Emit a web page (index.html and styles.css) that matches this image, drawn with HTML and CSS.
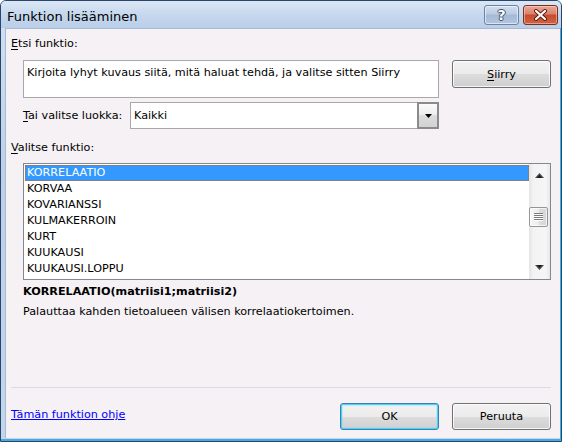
FILE: index.html
```html
<!DOCTYPE html>
<html lang="fi">
<head>
<meta charset="UTF-8" />
<title>Funktion lisääminen</title>
<link rel="stylesheet" href="styles.css">
</head>
<body>

<div class="window">
  <div class="titlebar">
    <span class="title">Funktion lisääminen</span>
    <div class="caption-buttons">
      <div class="cap help">?</div>
      <div class="cap close">
        <svg width="15" height="12" viewBox="0 0 15 12">
          <path d="M3 2 L12 10 M12 2 L3 10" stroke="#5a1c12" stroke-width="4" stroke-linecap="round" fill="none"/>
          <path d="M3 2 L12 10 M12 2 L3 10" stroke="#ffffff" stroke-width="2.2" stroke-linecap="round" fill="none"/>
        </svg>
      </div>
    </div>
  </div>

  <div class="client">
    <div class="label"><u>E</u>tsi funktio:</div>

    <div class="search-row">
      <div class="search-box">Kirjoita lyhyt kuvaus siitä, mitä haluat tehdä, ja valitse sitten Siirry</div>
      <button class="btn go"><u>S</u>iirry</button>
    </div>

    <div class="category-row">
      <span class="category-label"><u>T</u>ai valitse luokka:</span>
      <div class="combo">
        <span class="combo-text">Kaikki</span>
        <div class="combo-btn">
          <svg width="7" height="4" viewBox="0 0 7 4"><path d="M0 0 H7 L3.5 4 Z" fill="#000"/></svg>
        </div>
      </div>
    </div>

    <div class="label list-label"><u>V</u>alitse funktio:</div>

    <div class="listbox">
      <ul class="items">
        <li class="selected">KORRELAATIO</li>
        <li>KORVAA</li>
        <li>KOVARIANSSI</li>
        <li>KULMAKERROIN</li>
        <li>KURT</li>
        <li>KUUKAUSI</li>
        <li>KUUKAUSI.LOPPU</li>
      </ul>
      <div class="scrollbar">
        <div class="arrow">
          <svg width="9" height="5" viewBox="0 0 9 5"><path d="M0 5 L4.5 0 L9 5 Z" fill="#4a4a4a"/><path d="M2 5 L4.5 2 L7 5 Z" fill="#1a1a1a"/></svg>
        </div>
        <div class="thumb">
          <svg width="9" height="8" viewBox="0 0 9 8">
            <path d="M0 0.5 H9 M0 2.5 H9 M0 4.5 H9 M0 6.5 H9" stroke="#7a7a7a" stroke-width="1"/>
            <path d="M0 1.5 H9 M0 3.5 H9 M0 5.5 H9 M0 7.5 H9" stroke="#ffffff" stroke-width="1"/>
          </svg>
        </div>
        <div class="track-fill"></div>
        <div class="arrow">
          <svg width="9" height="5" viewBox="0 0 9 5"><path d="M0 0 L4.5 5 L9 0 Z" fill="#4a4a4a"/><path d="M2 0 L4.5 3 L7 0 Z" fill="#1a1a1a"/></svg>
        </div>
      </div>
    </div>

    <div class="signature">KORRELAATIO(matriisi1;matriisi2)</div>
    <div class="description">Palauttaa kahden tietoalueen välisen korrelaatiokertoimen.</div>

    <div class="separator"></div>

    <div class="footer">
      <a href="#" class="help-link">Tämän funktion ohje</a>
      <div class="footer-buttons">
        <button class="btn default">OK</button>
        <button class="btn">Peruuta</button>
      </div>
    </div>
  </div>
</div>

</body>
</html>
```

FILE: styles.css
```css
/* Base */
html, body {
  margin: 0;
  padding: 0;
  background: #ffffff;
  font-family: "DejaVu Sans", Verdana, sans-serif;
  font-size: 11.2px;
  color: #000;
}

u { text-decoration: underline; text-underline-offset: 2px; }

/* Window frame */
.window {
  width: 562px;
  height: 442px;
  box-sizing: border-box;
  border: 1px solid #29466a;
  border-radius: 6px 6px 0 0;
  padding: 0 1px 3px 4px;
  background: linear-gradient(#d3e2f3, #bcd0e8 40%, #c2d6ec);
  box-shadow: inset -1px 0 0 #35b3ec, inset 0 -2px 0 #4aa8dc;
  display: flex;
  flex-direction: column;
  overflow: hidden;
}

/* Title bar */
.titlebar {
  height: 27px;
  margin: 0 -1px 0 -4px;
  padding: 0 3px 0 6px;
  display: flex;
  align-items: flex-start;
  justify-content: space-between;
  background: linear-gradient(#dbe7f5, #c6d8ee 50%, #b9cee8);
}
.title {
  font-size: 13px;
  line-height: 16px;
  margin-top: 8px;
  color: #000;
}
.caption-buttons {
  display: flex;
  gap: 4px;
  margin-top: 4px;
}
.cap {
  width: 35px;
  height: 20px;
  box-sizing: border-box;
  border-radius: 3px;
  display: flex;
  align-items: center;
  justify-content: center;
}
.help {
  border: 1px solid #6c83a3;
  background: linear-gradient(#d2deee, #b9cbe3 45%, #a3b9d6 50%, #b2c6e0);
  box-shadow: inset 0 0 0 1px rgba(255,255,255,0.55);
  color: #fff;
  font-weight: bold;
  font-size: 14px;
  line-height: 18px;
  text-shadow: 1px 0 0 #3b4d66, -1px 0 0 #3b4d66, 0 1px 0 #3b4d66, 0 -1px 0 #3b4d66;
}
.close {
  border: 1px solid #7c2d20;
  background: linear-gradient(#e9a998, #d9806b 45%, #c54a30 50%, #d2643f);
  box-shadow: inset 0 0 0 1px rgba(255,220,210,0.5);
}

/* Client area */
.client {
  flex: 1;
  background: #f5f1f5;
  box-shadow: inset 1px 1px 0 #a7bad3;
  padding: 8px 9px 8px 6px;
  display: flex;
  flex-direction: column;
}
.label {
  line-height: 16px;
}

.search-row {
  display: flex;
  margin: 8px 0 0 12px;
}
.search-box {
  box-sizing: border-box;
  width: 416px;
  height: 38px;
  border: 1px solid #a8a8a8;
  background: #fff;
  padding: 4px 3px 3px;
  line-height: 16px;
}
.btn {
  box-sizing: border-box;
  width: 99px;
  height: 27px;
  padding: 0;
  border: 1px solid #707070;
  border-radius: 3px;
  background: linear-gradient(#f2f2f2, #ebebeb 50%, #dddddd 50%, #cfcfcf);
  box-shadow: inset 0 0 0 1px rgba(255,255,255,0.8);
  font: inherit;
  color: #000;
}
.btn.go {
  height: 28px;
  margin-left: auto;
}
.btn.default {
  border-color: #3c7fb1;
  box-shadow: inset 0 0 0 1px #4fd0f7, inset 0 0 0 2px rgba(120,220,250,0.35);
}

/* Category */
.category-row {
  display: flex;
  align-items: center;
  margin: 4px 0 0 12px;
}
.category-label {
  width: 107px;
}
.combo {
  box-sizing: border-box;
  width: 309px;
  height: 27px;
  border: 1px solid #a8a8a8;
  background: #fff;
  display: flex;
}
.combo-text {
  flex: 1;
  padding-left: 3px;
  line-height: 25px;
}
.combo-btn {
  box-sizing: border-box;
  width: 22px;
  margin: -1px -1px -1px 0;
  border: 2px solid #8b8b8b;
  background: linear-gradient(#fbfbfb, #ececec 50%, #dcdcdc 50%, #d2d2d2);
  display: flex;
  align-items: center;
  justify-content: center;
}

/* Function list */
.list-label {
  margin-top: 11px;
}
.listbox {
  box-sizing: border-box;
  width: 528px;
  height: 117px;
  margin: 7px 0 0 12px;
  border: 1px solid #828790;
  background: #fff;
  display: flex;
}
.items {
  flex: 1;
  list-style: none;
  margin: 0;
  padding: 1px 0 0 1px;
}
.items li {
  height: 16px;
  line-height: 16px;
  padding-left: 2px;
}
.items li.selected {
  background: #3399ff;
  color: #fff;
  outline: 1px dotted #c96a10;
  outline-offset: -1px;
}
.scrollbar {
  width: 21px;
  display: flex;
  flex-direction: column;
  background: linear-gradient(90deg, #e4e4e4, #f3f3f3 20%, #f6f6f6 80%, #e8e8e8);
}
.arrow {
  height: 23px;
  display: flex;
  align-items: center;
  justify-content: center;
}
.thumb {
  box-sizing: border-box;
  height: 20px;
  margin: 20px 2px 0 0;
  border: 1px solid #969696;
  border-radius: 2px;
  background: linear-gradient(90deg, #f7f7f7, #ececec 50%, #dedede 50%, #d6d6d6);
  box-shadow: inset 0 0 0 1px rgba(255,255,255,0.7);
  display: flex;
  align-items: center;
  justify-content: center;
}
.track-fill { flex: 1; }

/* Details */
.signature {
  margin: 4px 0 0 12px;
  line-height: 16px;
  font-weight: bold;
}
.description {
  margin: 4px 0 0 12px;
  line-height: 16px;
}
.separator {
  margin-top: auto;
  border-top: 1px solid #d9dbe2;
}

/* Footer */
.footer {
  display: flex;
  margin-top: 15px;
}
.help-link {
  color: #0000ff;
  line-height: 16px;
  margin-top: 4px;
}
.footer-buttons {
  margin-left: auto;
  display: flex;
  gap: 13px;
}
```
